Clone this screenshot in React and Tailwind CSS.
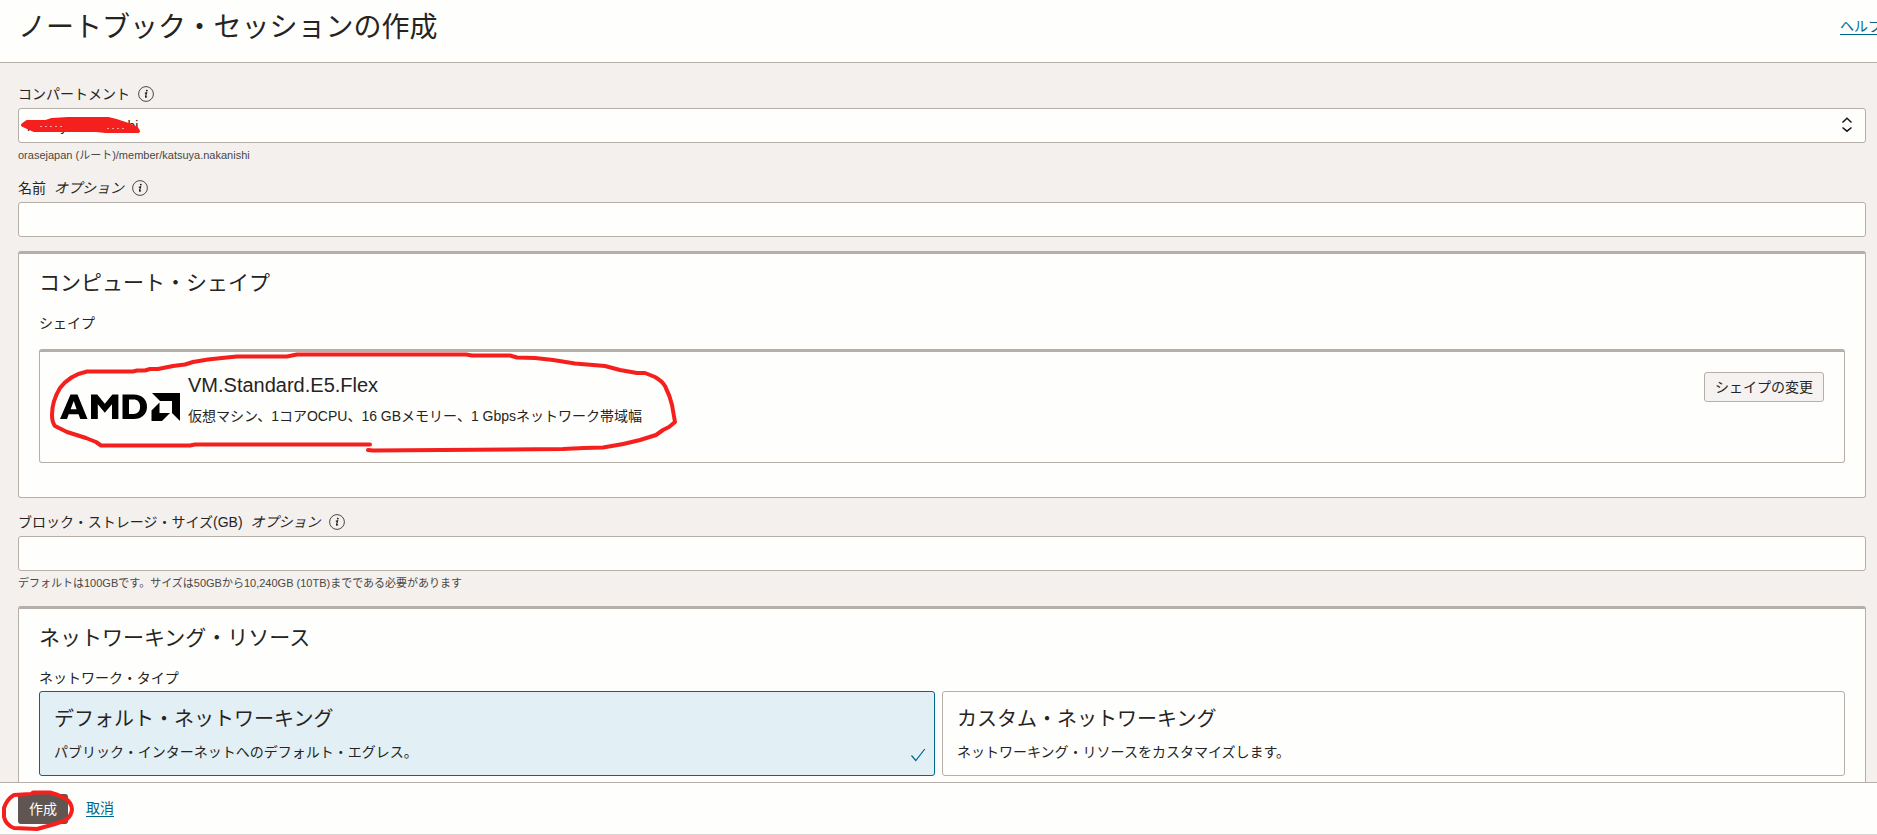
import React, { useState } from "react";

const InfoIcon = () => (
  <svg className="w-4 h-4 shrink-0" viewBox="0 0 16 16" fill="none">
    <circle cx="8" cy="8" r="7.4" stroke="#4a4744" strokeWidth="1" />
    <circle cx="8.8" cy="4.6" r="0.9" fill="#161513" />
    <path d="M6.800 7.200 8.600 6.700 7.500 10.800Q7.600 11.700 9 10.600" stroke="#161513" strokeWidth="1.100" />
  </svg>
);

const AmdLogo = () => (
  <svg className="w-[120px] h-[30px] shrink-0" viewBox="0 0 120 30" fill="#000">
    <path fillRule="evenodd" d="M0 27 10.500 2.500h7L27.500 27h-7.200l-1.800-4.700H8.700L7 27ZM10.600 17.200h6L13.700 9Z" />
    <path d="M31 27V2.500h6.200l7.600 9.300 7.600-9.300h6V27H52V12.300l-7.200 8.500-7-8.500V27Z" />
    <path fillRule="evenodd" d="M62.500 2.500h11.300C82 2.500 87 7.500 87 14.700S82 27 73.500 27h-11ZM69 7.600v14.300h4.500c4.200 0 6.600-2.800 6.600-7.200s-2.400-7.100-6.600-7.100Z" />
    <path d="M92 1h28v28l-8-8V9h-12ZM99.500 10.500V21h10.500l-8 8H91.500V18.500Z" />
  </svg>
);

const FieldLabel = ({ htmlFor, text, optional }) => (
  <div className="flex items-center h-5">
    <label htmlFor={htmlFor} className="text-sm leading-5">
      {text}
      {optional && <em className="ml-2">オプション</em>}
    </label>
    <span className="ml-2">
      <InfoIcon />
    </span>
  </div>
);

const networks = [
  {
    id: "default",
    title: "デフォルト・ネットワーキング",
    description: "パブリック・インターネットへのデフォルト・エグレス。",
  },
  {
    id: "custom",
    title: "カスタム・ネットワーキング",
    description: "ネットワーキング・リソースをカスタマイズします。",
  },
];

const App = () => {
  const [name, setName] = useState("");
  const [storage, setStorage] = useState("");
  const [network, setNetwork] = useState("default");

  return (
    <div
      lang="ja"
      className="h-screen flex flex-col overflow-hidden bg-[#f4f0ee] text-[#262422] font-['Liberation_Sans','Noto_Sans_CJK_JP',sans-serif]"
    >
      {/* Header */}
      <header className="flex justify-between items-start shrink-0 h-[63px] pl-[18px] pt-2 bg-[#fefefc] border-b border-[#b6aea8]">
        <h1 className="text-[28px] leading-10">ノートブック・セッションの作成</h1>
        <a href="#help" className="-mr-[5px] pt-2 text-sm leading-5 whitespace-nowrap text-[#00688c] underline underline-offset-3">
          ヘルプ
        </a>
      </header>

      {/* Form */}
      <main className="flex-1 min-h-0 overflow-y-auto [scrollbar-width:none] pl-[18px] pr-[11px] pt-[21px]">
        <FieldLabel htmlFor="compartment" text="コンパートメント" />
        <div className="relative mt-1">
          <select
            id="compartment"
            className="block w-full h-[35px] px-2 appearance-none bg-[#fefefc] border border-[#b6aea8] rounded-[3px] text-sm"
          >
            <option>katsuya.nakanishi</option>
          </select>
          <svg className="absolute right-3 top-2 w-[14px] h-[18px] pointer-events-none" viewBox="0 0 14 18" fill="none" stroke="#161513" strokeWidth="1.5">
            <path d="M2.500 6.500 7 2.200l4.500 4.300M2.500 11.500 7 15.200l4.500-3.700" />
          </svg>
          {/* Marker over the compartment name */}
          <svg className="absolute left-0 top-0 w-[130px] h-[35px] pointer-events-none" viewBox="18 108 130 35" fill="none" stroke="#f5201e" strokeWidth="4" strokeLinecap="round" strokeLinejoin="round">
            <path d="M23 125 27 122H46L52 120 68 119H108L116 121 128 125 136 128 138 131H106L96 130H34Z" fill="#f5201e" />
            <path d="M40 126.500H62M107 128.500H124" stroke="#fefefc" strokeOpacity="0.600" strokeWidth="1" strokeDasharray="2 3" strokeLinecap="butt" />
          </svg>
        </div>
        <p className="mt-1 text-[11px] leading-4 text-[#4a4744]">
          orasejapan (ルート)/member/katsuya.nakanishi
        </p>

        <div className="mt-[15px]">
          <FieldLabel htmlFor="name" text="名前" optional />
          <input
            id="name"
            type="text"
            value={name}
            onChange={(e) => setName(e.target.value)}
            className="block mt-1 w-full h-[35px] px-2 bg-[#fefefc] border border-[#b6aea8] rounded-[3px] text-sm"
          />
        </div>

        {/* Compute shape */}
        <section className="mt-[14px] px-5 pt-[15px] pb-[34px] bg-[#fefefc] border border-t-3 border-[#b6aea8] rounded-[3px]">
          <h2 className="text-[21px] leading-7">コンピュート・シェイプ</h2>
          <h3 className="mt-4 text-sm leading-5">シェイプ</h3>
          <div className="relative mt-4 flex items-start h-[114px] px-5 pt-5 bg-[#fefefc] border border-t-3 border-[#b6aea8] rounded-[3px]">
            <div className="pt-5">
              <AmdLogo />
            </div>
            <div className="ml-2 flex-1">
              <p className="text-xl leading-[26px]">VM.Standard.E5.Flex</p>
              <p className="mt-2 text-sm leading-5">
                仮想マシン、1コアOCPU、16 GBメモリー、1 Gbpsネットワーク帯域幅
              </p>
            </div>
            <button
              type="button"
              className="h-[30px] px-[10px] bg-[#f5f2f1] border border-[#b6aea8] rounded-[3px] text-sm leading-5"
            >
              シェイプの変更
            </button>
            {/* Marker round the selected shape */}
            <svg className="absolute left-0 top-0 w-[640px] h-[102px] pointer-events-none" viewBox="40 352 640 102" fill="none" stroke="#f5201e" strokeWidth="4" strokeLinecap="round" strokeLinejoin="round">
              <path d="M370 444.500H195L190 445.500H101L96 442 86 438 67 432 55 426Q52 422 52 415 52 401 60 388 70 375 87 371.500H133L137 370.500H145L150 369H158L173 366 185 364.500 193 362 208 359.500 222 358 237 356.500H287L297 354.500H466L472 355.500H510L517 357.500 535 358 553 360 575 363.500 605 366 620 370 637 373H645L655 377Q662 381 665 386 670 396 672 405L675 422 669 427 663 430 656 435 640 440Q622 445 603 447.500L584 448 563 449 373 450.500 368 450" />
            </svg>
          </div>
        </section>

        <div className="mt-[14px]">
          <FieldLabel htmlFor="storage" text="ブロック・ストレージ・サイズ(GB)" optional />
          <input
            id="storage"
            type="text"
            value={storage}
            onChange={(e) => setStorage(e.target.value)}
            className="block mt-1 w-full h-[35px] px-2 bg-[#fefefc] border border-[#b6aea8] rounded-[3px] text-sm"
          />
          <p className="mt-1 text-[11px] leading-4 text-[#4a4744]">
            デフォルトは100GBです。サイズは50GBから10,240GB (10TB)までである必要があります
          </p>
        </div>

        {/* Networking */}
        <section className="mt-[15px] px-5 pt-[15px] pb-8 bg-[#fefefc] border border-t-3 border-[#b6aea8] rounded-[3px]">
          <h2 className="text-[21px] leading-7">ネットワーキング・リソース</h2>
          <h3 className="mt-4 text-sm leading-5">ネットワーク・タイプ</h3>
          <div className="mt-[3px] grid grid-cols-[896fr_903fr] gap-[7px]">
            {networks.map((item) => (
              <button
                key={item.id}
                type="button"
                aria-pressed={network === item.id}
                onClick={() => setNetwork(item.id)}
                className={`relative h-[85px] px-[14px] text-left border rounded-[3px] ${
                  network === item.id ? "bg-[#e2eff5] border-[#00688c]" : "bg-[#fefefc] border-[#b6aea8]"
                }`}
              >
                <span className="block text-xl leading-7">{item.title}</span>
                <span className="block mt-[9px] text-sm leading-5">{item.description}</span>
                {network === item.id && (
                  <svg className="absolute right-2 bottom-3 w-4 h-4" viewBox="0 0 16 16" fill="none" stroke="#00688c" strokeWidth="1.200">
                    <path d="M1.500 8.500 5.800 13.500 14.800 2" />
                  </svg>
                )}
              </button>
            ))}
          </div>
        </section>
      </main>

      {/* Actions */}
      <footer className="flex items-start shrink-0 h-[53px] pl-[18px] pt-[11px] bg-[#fefefc] border-y border-t-[#b6aea8] border-b-[#d9d8d6]">
        <div className="relative">
          <button type="button" className="block h-[30px] px-[11px] bg-[#5f5652] rounded-[3px] text-sm leading-5 text-white">
            作成
          </button>
          <svg className="absolute -left-[18px] -top-1 w-20 h-11 pointer-events-none" viewBox="0 790 80 44" fill="none" stroke="#f5201e" strokeWidth="4" strokeLinejoin="round">
            <path d="M14 828 37 829 55 824 66 820Q72 815 72 809 71 802 66 799L58 795 50 792.500H33L31 794 14 795Q7 799 4 808V817Q6 825 14 828Z" />
          </svg>
        </div>
        <a href="#cancel" className="ml-[18px] pt-1 text-sm leading-5 text-[#00688c] underline underline-offset-3">
          取消
        </a>
      </footer>
    </div>
  );
};

export default App;
